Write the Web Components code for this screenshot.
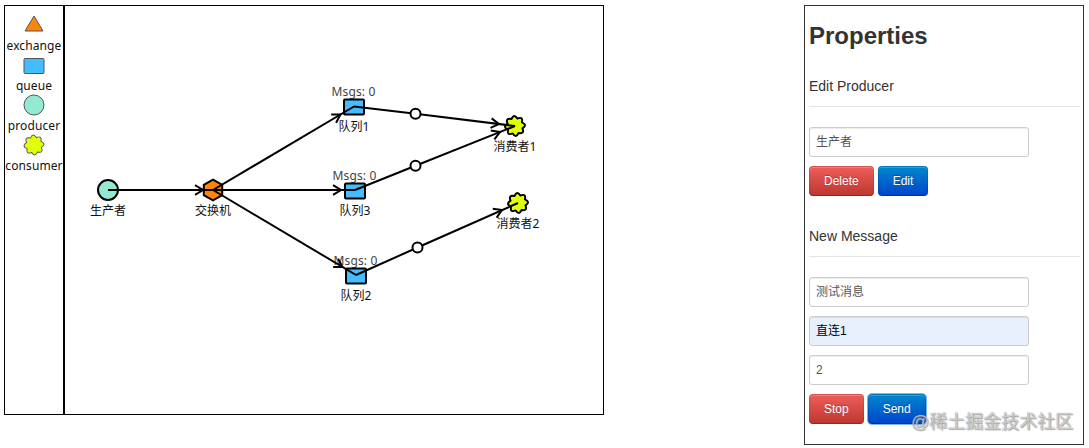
<!DOCTYPE html>
<html lang="zh-CN">
<head>
<meta charset="utf-8">
<title>Simulator</title>
<style>
body {
  margin: 0;
  background: #fff;
  font-family: "Liberation Sans", "Noto Sans CJK SC", sans-serif;
}
</style>
</head>
<body>
<mq-simulator></mq-simulator>

<script>
// eight rounded lobes, each one a quadratic curve between two inner points
const starPath = (() => {
  const at = (r, deg) => {
    const a = deg * Math.PI / 180;
    return (r * Math.cos(a)).toFixed(2) + "," + (r * Math.sin(a)).toFixed(2);
  };
  let d = "M" + at(7.8, -22.5);
  for (let i = 0; i < 8; i++) {
    d += " Q" + at(12.9, i * 45) + " " + at(7.8, i * 45 + 22.5);
  }
  return d + "Z";
})();

const shapes = {
  triangle: `<polygon points="0,-9 9,6 -9,6" fill="#ff8408"/>`,
  exchange: `<polygon points="0,-10.3 9.2,-5.2 9.2,5.2 0,10.3 -9.2,5.2 -9.2,-5.2" fill="#ff8408"/>`,
  queue: `<rect x="-10" y="-7.5" width="20" height="15" rx="1" fill="#43bdff"/>`,
  producer: `<circle r="10" fill="#92ebd0"/>`,
  consumer: `<path d="${starPath}" fill="#e1ff08" stroke-linejoin="round" transform="rotate(-5)"/>`
};

class MqShape extends HTMLElement {
  constructor() {
    super();
    this.attachShadow({ mode: "open" });
  }
  connectedCallback() {
    const thin = this.hasAttribute("thin");
    this.shadowRoot.innerHTML = `
<style>
:host { display: block; width: 24px; height: 24px; }
svg { display: block; }
</style>
<svg width="24" height="24" viewBox="-12 -12 24 24" stroke="${thin ? "#555" : "#000"}" stroke-width="${thin ? 1 : 2}">${shapes[this.getAttribute("type")]}</svg>`;
  }
}
customElements.define("mq-shape", MqShape);

const paletteItem = document.createElement("template");
paletteItem.innerHTML = `
<style>
:host {
  display: flex;
  flex-direction: column;
  align-items: center;
  gap: 1px;
  height: 40px;
  font: 12px/16px "Noto Sans", sans-serif;
  letter-spacing: .1px;
  color: #111;
  white-space: nowrap;
}
</style>
<slot name="icon"></slot>
<slot></slot>
`;

class MqPaletteItem extends HTMLElement {
  constructor() {
    super();
    this.attachShadow({ mode: "open" });
    this.shadowRoot.appendChild(paletteItem.content.cloneNode(true));
  }
}
customElements.define("mq-palette-item", MqPaletteItem);

const palette = document.createElement("template");
palette.innerHTML = `
<style>
:host {
  display: block;
  box-sizing: border-box;
  width: 60px;
  height: 410px;
  padding-top: 7px;
  border: 1px solid #000;
}
mq-shape[type="queue"] { padding-top: 1px; margin-bottom: -1px; }
</style>
<mq-palette-item><mq-shape slot="icon" type="triangle" thin></mq-shape>exchange</mq-palette-item>
<mq-palette-item><mq-shape slot="icon" type="queue" thin></mq-shape>queue</mq-palette-item>
<mq-palette-item><mq-shape slot="icon" type="producer" thin></mq-shape>producer</mq-palette-item>
<mq-palette-item><mq-shape slot="icon" type="consumer" thin></mq-shape>consumer</mq-palette-item>
`;

class MqPalette extends HTMLElement {
  constructor() {
    super();
    this.attachShadow({ mode: "open" });
    this.shadowRoot.appendChild(palette.content.cloneNode(true));
  }
}
customElements.define("mq-palette", MqPalette);

// x / y are the centre of the shape on the canvas
class MqNode extends HTMLElement {
  constructor() {
    super();
    this.attachShadow({ mode: "open" });
  }
  connectedCallback() {
    const type = this.getAttribute("type");
    this.style.left = this.getAttribute("x") + "px";
    this.style.top = this.getAttribute("y") + "px";
    this.shadowRoot.innerHTML = `
<style>
:host {
  position: absolute;
  display: flex;
  flex-direction: column;
  align-items: center;
  width: 80px;
  margin: -12px 0 0 -40px;
  font: 12px/16px "Noto Sans", "Noto Sans CJK SC", sans-serif;
  color: #111;
  white-space: nowrap;
}
.msgs { height: 16px; margin: -11px 1px 0 0; letter-spacing: .15px; color: #444; }
mq-shape { margin-top: ${type === "queue" ? "-5px" : "0"}; }
.label { margin-top: ${type === "queue" ? "0" : "1px"}; }
</style>
${type === "queue" ? `<div class="msgs">Msgs: 0</div>` : ""}
<mq-shape type="${type}"></mq-shape>
<div class="label"><slot></slot></div>`;
  }
}
customElements.define("mq-node", MqNode);

// from, to, arrow tip, and the handle in the middle of a binding
const wires = [
  { from: [43, 184], to: [148, 184], tip: [138, 184] },
  { from: [148, 184], to: [289, 100.5], tip: [275.5, 108.5] },
  { from: [148, 184], to: [290, 184], tip: [276, 184] },
  { from: [148, 184], to: [291, 269], tip: [277.5, 261] },
  { from: [289, 100.5], to: [450, 120], tip: [434, 118.1], knob: [350.5, 107.7] },
  { from: [290, 184], to: [450, 120], tip: [435, 126], knob: [350.5, 159.8] },
  { from: [291, 269], to: [453, 197], tip: [437, 204], knob: [352.5, 241.5] }
];

class MqWires extends HTMLElement {
  constructor() {
    super();
    this.attachShadow({ mode: "open" });
    this.shadowRoot.innerHTML = `
<style>
:host { position: absolute; inset: 0; display: block; }
svg { display: block; }
</style>
<svg width="538" height="408" fill="none" stroke="#000" stroke-width="2">${wires.map(w => this.draw(w)).join("")}</svg>`;
  }
  draw({ from, to, tip, knob }) {
    const start = knob || from;
    const angle = Math.atan2(to[1] - start[1], to[0] - start[0]) * 180 / Math.PI;
    const line = [from, ...(knob ? [knob] : []), to].map(p => p.join(",")).join(" ");
    return `
<polyline points="${line}"/>
<path d="M-8,-4.8 L0,0 L-8,4.8" transform="translate(${tip}) rotate(${angle})"/>
${knob ? `<circle cx="${knob[0]}" cy="${knob[1]}" r="5" fill="#fff"/>` : ""}`;
  }
}
customElements.define("mq-wires", MqWires);

const canvas = document.createElement("template");
canvas.innerHTML = `
<style>
:host {
  display: block;
  position: relative;
  box-sizing: border-box;
  width: 540px;
  height: 410px;
  border: 1px solid #000;
}
</style>
<mq-node type="producer" x="43" y="184">生产者</mq-node>
<mq-node type="exchange" x="148" y="184">交换机</mq-node>
<mq-node type="queue" x="289" y="101">队列1</mq-node>
<mq-node type="queue" x="290" y="185">队列3</mq-node>
<mq-node type="queue" x="291" y="270">队列2</mq-node>
<mq-node type="consumer" x="450" y="120">消费者1</mq-node>
<mq-node type="consumer" x="453" y="197">消费者2</mq-node>
<mq-wires></mq-wires>
`;

class MqCanvas extends HTMLElement {
  constructor() {
    super();
    this.attachShadow({ mode: "open" });
    this.shadowRoot.appendChild(canvas.content.cloneNode(true));
  }
}
customElements.define("mq-canvas", MqCanvas);

const button = document.createElement("template");
button.innerHTML = `
<style>
:host { display: block; }
button {
  display: block;
  box-sizing: border-box;
  height: 30px;
  padding: 0 14px;
  border: 1px solid;
  border-color: rgba(0, 0, 0, .1) rgba(0, 0, 0, .1) rgba(0, 0, 0, .25);
  border-radius: 4px;
  font: 12px/20px "Liberation Sans", sans-serif;
  color: #fff;
  text-shadow: 0 -1px 0 rgba(0, 0, 0, .25);
  background: linear-gradient(#ee5f5b, #bd362f) border-box;
  box-shadow: inset 0 1px 0 rgba(255, 255, 255, .2);
}
:host([kind="primary"]) button { background: linear-gradient(#0088cc, #0044cc) border-box; }
:host([focused]) button { box-shadow: inset 0 1px 0 rgba(255, 255, 255, .2), 0 0 0 1px #7db4f5; }
</style>
<button><slot></slot></button>
`;

class MqButton extends HTMLElement {
  constructor() {
    super();
    this.attachShadow({ mode: "open" });
    this.shadowRoot.appendChild(button.content.cloneNode(true));
  }
}
customElements.define("mq-button", MqButton);

const field = document.createElement("template");
field.innerHTML = `
<style>
:host {
  display: block;
  box-sizing: border-box;
  width: 220px;
  height: 30px;
  margin-bottom: 9px;
  padding: 4px 6px;
  border: 1px solid #ccc;
  border-radius: 3px;
  font: 12px/20px "Liberation Sans", "Noto Sans CJK SC", sans-serif;
  color: #555;
  background: #fff;
  box-shadow: inset 0 1px 1px rgba(0, 0, 0, .075);
}
:host([autofilled]) { background: #e8f0fe; color: #000; }
</style>
<slot></slot>
`;

class MqField extends HTMLElement {
  constructor() {
    super();
    this.attachShadow({ mode: "open" });
    this.shadowRoot.appendChild(field.content.cloneNode(true));
  }
}
customElements.define("mq-field", MqField);

const section = document.createElement("template");
section.innerHTML = `
<style>
:host { display: block; }
.legend {
  height: 40px;
  margin-bottom: 20px;
  border-bottom: 1px solid #e5e5e5;
  font-size: 14px;
  line-height: 40px;
  color: #333;
}
.buttons { display: flex; gap: 4px; }
</style>
<div class="legend"><slot name="legend"></slot></div>
<slot></slot>
<div class="buttons"><slot name="button"></slot></div>
`;

class MqSection extends HTMLElement {
  constructor() {
    super();
    this.attachShadow({ mode: "open" });
    this.shadowRoot.appendChild(section.content.cloneNode(true));
  }
}
customElements.define("mq-section", MqSection);

const properties = document.createElement("template");
properties.innerHTML = `
<style>
:host {
  display: block;
  position: relative;
  box-sizing: border-box;
  width: 280px;
  height: 440px;
  padding: 10px 3px 0 4px;
  border: 1px solid #333;
}
h3 {
  margin: 0 0 10px;
  font-size: 24px;
  line-height: 40px;
  color: #333;
}
mq-section + mq-section { margin-top: 20px; }
.watermark {
  position: absolute;
  left: 106px;
  top: 403px;
  font: 18px/26px "Liberation Sans", "Noto Sans CJK SC", sans-serif;
  color: rgba(255, 255, 255, .6);
  text-shadow: 0 0 1px rgba(90, 90, 90, .8), 1px 1px 1px rgba(120, 120, 120, .6);
  white-space: nowrap;
}
</style>
<h3>Properties</h3>
<mq-section>
  <span slot="legend">Edit Producer</span>
  <mq-field>生产者</mq-field>
  <mq-button slot="button">Delete</mq-button>
  <mq-button slot="button" kind="primary">Edit</mq-button>
</mq-section>
<mq-section>
  <span slot="legend">New Message</span>
  <mq-field>测试消息</mq-field>
  <mq-field autofilled>直连1</mq-field>
  <mq-field>2</mq-field>
  <mq-button slot="button">Stop</mq-button>
  <mq-button slot="button" kind="primary" focused>Send</mq-button>
</mq-section>
<div class="watermark">@稀土掘金技术社区</div>
`;

class MqProperties extends HTMLElement {
  constructor() {
    super();
    this.attachShadow({ mode: "open" });
    this.shadowRoot.appendChild(properties.content.cloneNode(true));
  }
}
customElements.define("mq-properties", MqProperties);

const simulator = document.createElement("template");
simulator.innerHTML = `
<style>
:host {
  display: flex;
  align-items: flex-start;
  box-sizing: border-box;
  height: 448px;
  padding: 5px 0 0 4px;
}
mq-properties { margin-left: 200px; }
</style>
<mq-palette></mq-palette>
<mq-canvas></mq-canvas>
<mq-properties></mq-properties>
`;

class MqSimulator extends HTMLElement {
  constructor() {
    super();
    this.attachShadow({ mode: "open" });
    this.shadowRoot.appendChild(simulator.content.cloneNode(true));
  }
}
customElements.define("mq-simulator", MqSimulator);
</script>
</body>
</html>
